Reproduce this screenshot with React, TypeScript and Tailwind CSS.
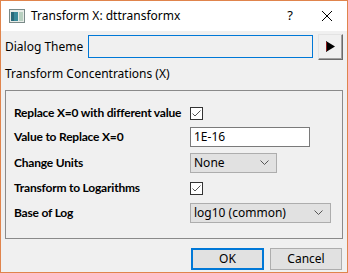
import { useState } from "react";

const font = { fontFamily: '"Noto Sans", "Segoe UI", sans-serif' };
const boldFont = { fontFamily: 'Lato, "Noto Sans", sans-serif' };

function Check() {
  return (
    <div className="w-[13px] h-[13px] border border-[#333] bg-white flex items-center justify-center">
      <svg width="11" height="11" viewBox="0 0 11 11">
        <path d="M1.5 5.5 L4 8 L9.5 2.5" fill="none" stroke="#555" strokeWidth="1" />
      </svg>
    </div>
  );
}

function Chevron() {
  return (
    <svg width="9" height="6" viewBox="0 0 9 6" className="mr-[7px]">
      <path d="M0.5 0.5 L4.5 4.5 L8.5 0.5" fill="none" stroke="#555" strokeWidth="1" />
    </svg>
  );
}

function Select({ value, width }: { value: string; width: string }) {
  return (
    <div className={`${width} h-[20px] bg-[#e1e1e1] border border-[#adadad] flex items-center justify-between pl-[3px]`}>
      <span className="text-[12px] text-black whitespace-nowrap">{value}</span>
      <Chevron />
    </div>
  );
}

function Row({ label, children, top }: { label: string; children: React.ReactNode; top: string }) {
  return (
    <div className={`flex items-center h-[20px] ${top}`}>
      <div className="w-[176px] text-[12px] tracking-[-0.2px] font-bold text-black whitespace-nowrap" style={boldFont}>{label}</div>
      {children}
    </div>
  );
}

export default function App() {
  const [units] = useState("None");
  return (
    <div className="w-[348px] h-[273px] border border-[#e0844c] bg-[#f0f0f0] flex flex-col overflow-hidden" style={font}>
      <div className="h-[30px] bg-white flex items-center pl-[8px] shrink-0">
        <svg width="16" height="14" viewBox="0 0 16 14">
          <rect x="0.5" y="0.5" width="15" height="13" fill="#e8ece8" stroke="#7a8a88" />
          <rect x="2" y="3" width="7" height="9" fill="#3a8a9a" />
          <rect x="2" y="3" width="3" height="9" fill="#2a6a7a" />
          <rect x="10" y="3" width="4" height="9" fill="#b8d0c0" />
        </svg>
        <span className="ml-[6px] text-[12px] text-black">Transform X: dttransformx</span>
        <span className="ml-auto text-[13px] text-black mr-[28px]">?</span>
        <svg width="12" height="12" viewBox="0 0 12 12" className="mr-[14px]">
          <path d="M1 1 L11 11 M11 1 L1 11" stroke="#000" strokeWidth="1" />
        </svg>
      </div>

      <div className="flex items-center pl-[4px] pt-[3px] h-[28px]">
        <span className="w-[83px] text-[12px] text-black whitespace-nowrap">Dialog Theme</span>
        <div className="w-[225px] h-[23px] border border-[#0078d7] bg-[#f0f0f0]" />
        <div className="ml-[5px] w-[25px] h-[26px] bg-[#f0f0f0] border border-[#e3e3e3] border-r-[#6a6a6a] border-b-[#6a6a6a] flex items-center justify-center shadow-[inset_-1px_-1px_0_#a0a0a0]">
          <svg width="9" height="11" viewBox="0 0 9 11">
            <path d="M0 0 L9 5.5 L0 11 Z" fill="#000" />
            <rect x="0" y="1" width="1" height="9" fill="#8a1a1a" />
          </svg>
        </div>
      </div>

      <div className="pl-[4px] mt-[6px] text-[12px] text-black">Transform Concentrations (X)</div>

      <div className="mx-[4px] mt-[7px] w-[338px] h-[149px] border border-[#8a8a8a] flex flex-col pl-[8px] pt-[12px]">
        <Row label="Replace X=0 with different value" top="">
          <Check />
        </Row>
        <Row label="Value to Replace X=0" top="mt-[4px]">
          <div className="w-[120px] h-[20px] border border-[#7a7a7a] bg-white flex items-center pl-[3px] text-[12px] text-black">
            1E-16
          </div>
        </Row>
        <Row label="Change Units" top="mt-[6px]">
          <Select value={units} width="w-[87px]" />
        </Row>
        <Row label="Transform to Logarithms" top="mt-[5px]">
          <Check />
        </Row>
        <Row label="Base of Log" top="mt-[5px]">
          <Select value="log10 (common)" width="w-[141px]" />
        </Row>
      </div>

      <div className="flex justify-end gap-[6px] mr-[5px] mt-[9px]">
        <div className="w-[73px] h-[22px] bg-[#e1e1e1] border-2 border-[#0078d7] flex items-center justify-center text-[12px] text-black">OK</div>
        <div className="w-[72px] h-[22px] bg-[#e1e1e1] border border-[#adadad] flex items-center justify-center text-[12px] text-black">Cancel</div>
      </div>
    </div>
  );
}
